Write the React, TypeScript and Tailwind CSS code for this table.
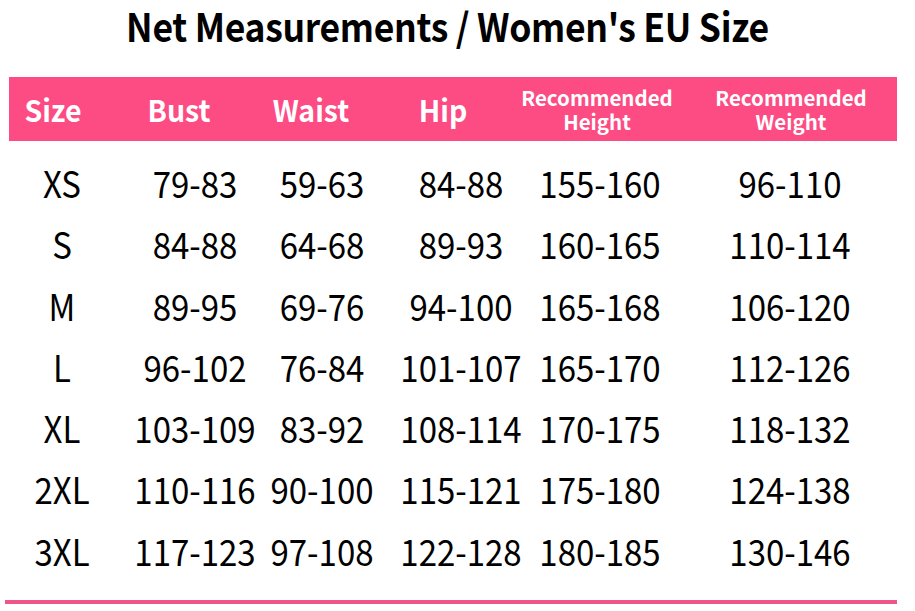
const rows = [
  ["XS", "79-83", "59-63", "84-88", "155-160", "96-110"],
  ["S", "84-88", "64-68", "89-93", "160-165", "110-114"],
  ["M", "89-95", "69-76", "94-100", "165-168", "106-120"],
  ["L", "96-102", "76-84", "101-107", "165-170", "112-126"],
  ["XL", "103-109", "83-92", "108-114", "170-175", "118-132"],
  ["2XL", "110-116", "90-100", "115-121", "175-180", "124-138"],
  ["3XL", "117-123", "97-108", "122-128", "180-185", "130-146"],
]

const font = { fontFamily: '"Noto Sans CJK SC", "Source Sans Pro", sans-serif' }

export default function App() {
  return (
    <div className="w-[915px] h-[611px] overflow-hidden bg-white text-black" style={font}>
      <div className="h-[77px] pt-[5px] pr-[20px] flex justify-center">
        <h1 className="text-[35.5px] font-bold leading-[44px] tracking-[-0.3px] whitespace-nowrap scale-y-110">
          Net Measurements / Women's EU Size
        </h1>
      </div>

      <div className="ml-[9px] w-[888px] h-[64px] bg-[#fd4b84] grid grid-cols-[88px_164px_100px_164px_144px_228px] items-center text-white font-bold">
        <div className="justify-self-center text-[28.5px] scale-y-105">Size</div>
        <div className="justify-self-center text-[28.5px] scale-y-105">Bust</div>
        <div className="justify-self-center text-[28.5px] scale-y-105">Waist</div>
        <div className="justify-self-center text-[28.5px] scale-y-105">Hip</div>
        <div className="justify-self-center text-center text-[20.5px] leading-[24px] whitespace-nowrap">
          Recommended
          <br />
          Height
        </div>
        <div className="justify-self-center text-center text-[20.5px] leading-[24px] whitespace-nowrap pl-[16px]">
          Recommended
          <br />
          Weight
        </div>
      </div>

      <div className="pt-[12px]">
        {rows.map((row) => (
          <div
            key={row[0]}
            className="h-[61.3px] grid grid-cols-[124px_142px_112px_166px_112px_259px] items-center text-[33px] leading-none scale-y-110"
          >
            {row.map((cell, i) => (
              <div key={i} className={`justify-self-center whitespace-nowrap ${i === 5 ? "pl-[9px]" : ""}`}>
                {cell}
              </div>
            ))}
          </div>
        ))}
      </div>

      <div className="mt-[18px] ml-[5px] w-[892px] h-[4px] bg-[#f0558a]" />
    </div>
  )
}
